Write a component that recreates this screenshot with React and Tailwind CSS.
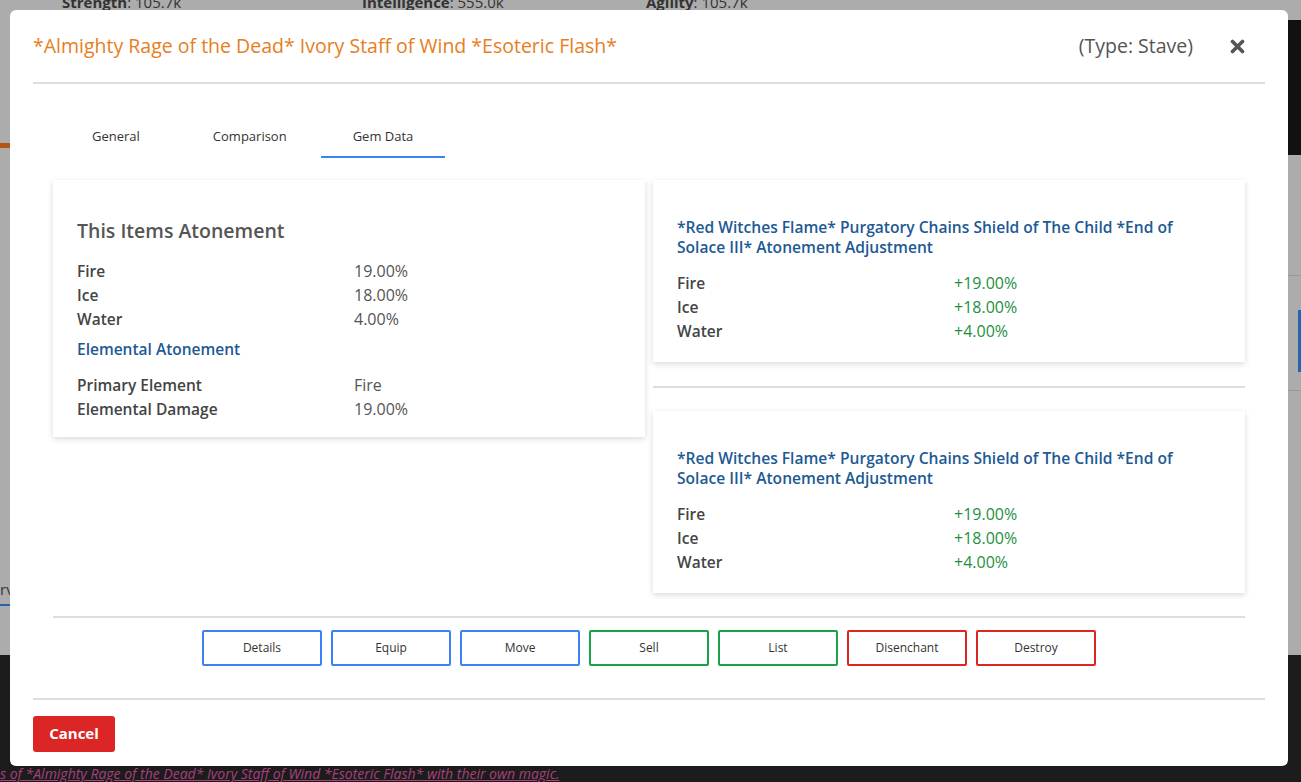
import React from "react";

const font = { fontFamily: "'Open Sans', 'Noto Sans', sans-serif" };

const atonement = [
  ["Fire", "19.00%"],
  ["Ice", "18.00%"],
  ["Water", "4.00%"],
];

const adjustment = [
  ["Fire", "+19.00%"],
  ["Ice", "+18.00%"],
  ["Water", "+4.00%"],
];

const actions = [
  ["Details", "border-[#3b82f6]"],
  ["Equip", "border-[#3b82f6]"],
  ["Move", "border-[#3b82f6]"],
  ["Sell", "border-[#16a34a]"],
  ["List", "border-[#16a34a]"],
  ["Disenchant", "border-[#dc2626]"],
  ["Destroy", "border-[#dc2626]"],
];

function Row({ label, value, valueClass }) {
  return (
    <div className="grid grid-cols-[277px_1fr] leading-6">
      <div className="text-[15.5px] font-semibold text-[#444]">{label}</div>
      <div className={`text-[16px] ${valueClass}`}>{value}</div>
    </div>
  );
}

function AdjustCard() {
  return (
    <div className="bg-white shadow-[0_2px_6px_rgba(0,0,0,0.15)] px-6 pt-[37px] pb-[19px]">
      <div className="text-[15.6px] leading-5 font-semibold text-[#1d5a94] pr-10">
        *Red Witches Flame* Purgatory Chains Shield of The Child *End of Solace III* Atonement Adjustment
      </div>
      <div className="mt-[14px]">
        {adjustment.map(([l, v]) => (
          <Row key={l} label={l} value={v} valueClass="text-[#1e8f41]" />
        ))}
      </div>
    </div>
  );
}

export default function App() {
  return (
    <div className="relative w-[1301px] h-[782px] overflow-hidden bg-[#acacac]" style={font}>
      {/* dimmed page behind the modal */}
      <div className="absolute left-0 right-0 top-[655px] bottom-0 bg-[#1c1c1d]" />
      <div className="absolute top-[-9px] left-[62px] text-[15px] text-[#333]">
        <b>Strength</b>: 105.7k
      </div>
      <div className="absolute top-[-9px] left-[362px] text-[15px] text-[#333]">
        <b>Intelligence</b>: 555.0k
      </div>
      <div className="absolute top-[-9px] left-[646px] text-[15px] text-[#333]">
        <b>Agility</b>: 105.7k
      </div>
      <div className="absolute left-0 top-[143px] w-[10px] h-[5px] bg-[#b3560f]" />
      <div className="absolute left-0 top-[578px] text-[15px] text-[#333]">rv</div>
      <div className="absolute left-0 top-[604px] w-[10px] h-[2px] bg-[#2563b0]" />
      <div className="absolute right-0 top-[20px] w-[13px] h-[135px] bg-[#111]" />
      <div className="absolute right-0 top-[275px] w-[13px] h-px bg-[#999]" />
      <div className="absolute right-0 top-[310px] w-[3px] h-[62px] bg-[#2563b0]" />
      <div className="absolute right-0 top-[390px] w-[13px] h-px bg-[#999]" />
      <div className="absolute left-0 top-[763px] text-[14px] italic text-[#a8407a] underline whitespace-nowrap">
        s of *Almighty Rage of the Dead* Ivory Staff of Wind *Esoteric Flash* with their own magic.
      </div>

      {/* modal */}
      <div className="absolute left-[10px] top-[10px] w-[1278px] h-[756px] bg-white rounded-md px-[23px] flex flex-col">
        <div className="flex items-center h-[74px] border-b-2 border-[#dedede]">
          <div className="text-[19.5px] text-[#e67e22]">
            *Almighty Rage of the Dead* Ivory Staff of Wind *Esoteric Flash*
          </div>
          <div className="ml-auto text-[19.5px] text-[#555]">(Type: Stave)</div>
          <svg className="ml-[37px] mr-[20px]" width="15" height="15" viewBox="0 0 15 15">
            <path d="M2.5 2.5 L12.5 12.5 M12.5 2.5 L2.5 12.5" stroke="#555" strokeWidth="3.6" strokeLinecap="round" />
          </svg>
        </div>

        <div className="px-5">
          <div className="flex mt-[32px] ml-[7px] text-[13px] text-[#333]">
            <div className="px-8 pt-[11px] pb-[9px]">General</div>
            <div className="ml-[9px] px-8 pt-[11px] pb-[9px]">Comparison</div>
            <div className="ml-[2px] px-8 pt-[11px] pb-[9px] border-b-2 border-[#3b82f6]">Gem Data</div>
          </div>

          <div className="grid grid-cols-2 gap-2 mt-[22px] items-start">
            <div className="bg-white shadow-[0_2px_6px_rgba(0,0,0,0.15)] px-6 pt-[39px] pb-[16px]">
              <div className="text-[19.5px] font-semibold text-[#555] leading-6">This Items Atonement</div>
              <div className="mt-[16px]">
                {atonement.map(([l, v]) => (
                  <Row key={l} label={l} value={v} valueClass="text-[#555]" />
                ))}
              </div>
              <div className="mt-[6px] text-[15.5px] leading-6 font-semibold text-[#1d5a94]">Elemental Atonement</div>
              <div className="mt-[12px]">
                <Row label="Primary Element" value="Fire" valueClass="text-[#555]" />
                <Row label="Elemental Damage" value="19.00%" valueClass="text-[#555]" />
              </div>
            </div>

            <div className="flex flex-col">
              <AdjustCard />
              <div className="h-[2px] bg-[#dedede] mt-[24px] mb-[23px]" />
              <AdjustCard />
            </div>
          </div>

          <div className="h-[2px] bg-[#dedede] mt-[23px]" />
          <div className="flex justify-center gap-[9px] mt-[12px] mb-[32px]">
            {actions.map(([name, border]) => (
              <button
                key={name}
                className={`w-[120px] h-[36px] border-2 ${border} rounded-[2px] bg-white text-[12px] text-[#333]`}
              >
                {name}
              </button>
            ))}
          </div>
        </div>

        <div className="h-[2px] bg-[#dedede]" />
        <div className="mt-[16px]">
          <button className="w-[82px] h-[36px] bg-[#dc2626] rounded-[3px] text-white font-bold text-[15px]">
            Cancel
          </button>
        </div>
      </div>
    </div>
  );
}
